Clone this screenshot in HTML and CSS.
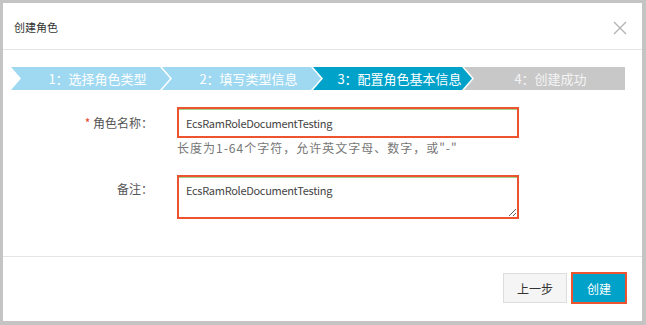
FILE: index.html
```html
<!DOCTYPE html>
<html lang="zh-CN">
<head>
  <meta charset="UTF-8" />
  <meta name="viewport" content="width=device-width, initial-scale=1.0" />
  <title>创建角色</title>
  <link rel="stylesheet" href="styles.css">
</head>
<body>
  <div class="dialog">

    <div class="dialog-header">
      <span class="dialog-title">创建角色</span>
      <span class="close-btn">
        <svg width="14" height="14" viewBox="0 0 14 14">
          <path d="M1 1 L13 13 M13 1 L1 13" stroke="#b4b4b4" stroke-width="1.4" fill="none" />
        </svg>
      </span>
    </div>

    <div class="dialog-body">
      <div class="steps">
        <div class="step done">1：选择角色类型</div>
        <div class="step done">2：填写类型信息</div>
        <div class="step active">3：配置角色基本信息</div>
        <div class="step todo last">4：创建成功</div>
      </div>

      <div class="form-row">
        <label class="form-label" for="nome"><span class="required">*</span> 角色名称：</label>
        <div class="form-field">
          <input type="text" id="nome" class="text-input mark" value="EcsRamRoleDocumentTesting" />
          <p class="hint">长度为1-64个字符，允许英文字母、数字，或"-"</p>
        </div>
      </div>

      <div class="form-row remark-row">
        <label class="form-label" for="nota">备注：</label>
        <div class="form-field">
          <textarea id="nota" class="text-area mark">EcsRamRoleDocumentTesting</textarea>
        </div>
      </div>
    </div>

    <div class="dialog-footer">
      <button class="btn">上一步</button>
      <button class="btn btn-primary">创建</button>
    </div>

  </div>
</body>
</html>
```

FILE: styles.css
```css
* {
  box-sizing: border-box;
  margin: 0;
  padding: 0;
  font-family: "Noto Sans CJK SC", "Liberation Sans", sans-serif;
}

body {
  background: #c4c4c4;
  width: 646px;
  height: 325px;
  overflow: hidden;
}

.dialog {
  width: 639px;
  height: 318px;
  margin: 3px 0 0 3px;
  background: #ffffff;
}

.dialog-header {
  height: 47px;
  border-bottom: 1px solid #e5e5e5;
  padding: 0 15px 0 11px;
  display: flex;
  align-items: center;
  justify-content: space-between;
}

.dialog-title {
  font-size: 11px;
  color: #333;
  margin-top: 1px;
}

.close-btn {
  display: flex;
  margin-top: 4px;
}

.dialog-body {
  height: 207px;
  border-bottom: 1px solid #e5e5e5;
  padding: 17px 0 0 8px;
}

.steps {
  display: flex;
  height: 23px;
}

.step {
  width: 161px;
  height: 23px;
  line-height: 23px;
  padding-left: 12px;
  text-align: center;
  font-size: 13px;
  color: #fff;
  clip-path: polygon(0 0, 149px 0, 159px 50%, 149px 100%, 0 100%, 10px 50%);
}

.step + .step {
  margin-left: -10px;
}

.step.last {
  clip-path: polygon(0 0, 100% 0, 100% 100%, 0 100%, 10px 50%);
}

.done {
  background: #9fd9f1;
}

.active {
  background: #00a2ca;
}

.todo {
  background: #c8c8c8;
  color: #f4f4f4;
}

.form-row {
  display: flex;
  margin-top: 17px;
  margin-left: -8px;
}

.remark-row {
  margin-top: 18px;
}

.form-label {
  width: 150px;
  margin-right: 24px;
  text-align: right;
  font-size: 12px;
  color: #555;
  line-height: 31px;
}

.remark-row .form-label {
  line-height: 28px;
}

.required {
  color: #e8472b;
}

.form-field {
  width: 342px;
}

.text-input {
  display: block;
  width: 342px;
  height: 31px;
  padding: 0 7px;
  font-size: 11px;
  letter-spacing: -0.3px;
  color: #444;
  outline: none;
}

.text-area {
  display: block;
  width: 342px;
  height: 44px;
  padding: 5px 7px;
  font-size: 11px;
  letter-spacing: -0.3px;
  color: #444;
  outline: none;
  resize: vertical;
}

.mark {
  border: 2px solid #ee5330;
  box-shadow: inset 0 1px 0 #9fd28a;
}

.hint {
  font-size: 12px;
  letter-spacing: 1px;
  color: #777;
  line-height: 18px;
  margin-top: 1px;
}

.dialog-footer {
  display: flex;
  justify-content: flex-end;
  gap: 4px;
  padding: 15px 15px 0 0;
}

.btn {
  height: 30px;
  padding: 0 13px;
  font-size: 12px;
  color: #333;
  background: #f5f5f5;
  border: 1px solid #dddddd;
  margin-top: 1px;
  cursor: pointer;
}

.btn-primary {
  height: 32px;
  margin-top: 0;
  padding: 0 14px;
  color: #fff;
  background: #00a2ca;
  border: 2px solid #ee5330;
}
```
